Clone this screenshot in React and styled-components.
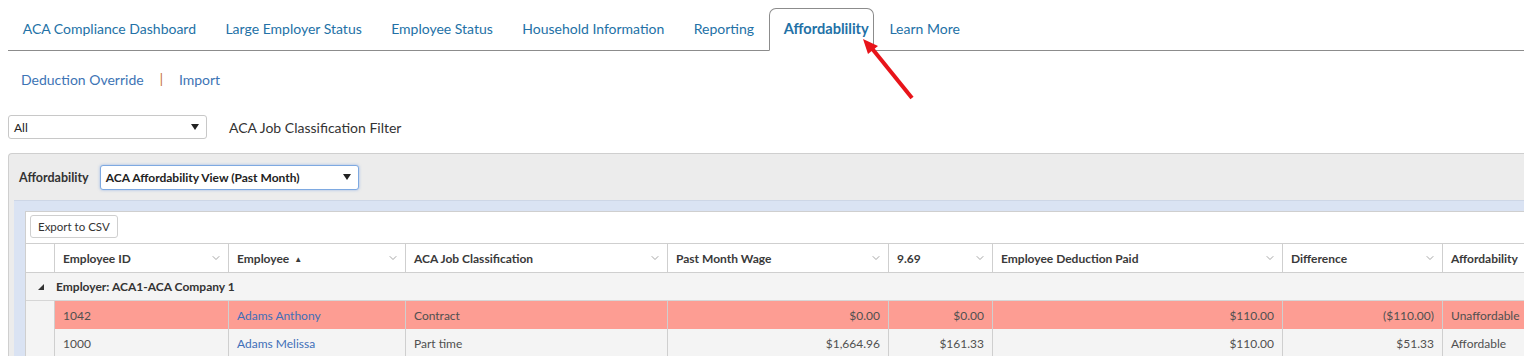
import React from "react";
import styled, { createGlobalStyle } from "styled-components";
import { ChevronDown } from "lucide-react";

const GlobalStyle = createGlobalStyle`
  body {
    margin: 0;
    overflow: hidden;
    background: #fff;
    font-family: Lato, "Open Sans", sans-serif;
    color: #333;
  }
`;

const Page = styled.div`
  position: relative;
  width: 1524px;
  height: 356px;
  overflow: hidden;
  padding-left: 8px;
  box-sizing: border-box;
`;

const TabBar = styled.div`
  display: flex;
  align-items: flex-end;
  margin-top: 7px;
  height: 43px;
  border-bottom: 1px solid #8c8c8c;
`;

const Tab = styled.div`
  height: ${p => (p.$active ? "43px" : "42px")};
  display: flex;
  align-items: center;
  box-sizing: border-box;
  padding: ${p => (p.$active ? "0 4px 2px 14px" : "0 14.7px 2px")};
  margin-bottom: ${p => (p.$active ? "-1px" : "0")};
  font-size: ${p => (p.$active ? "14.6px" : "14px")};
  font-weight: ${p => (p.$active ? 700 : 400)};
  color: #2371a6;
  background: #fff;
  border: ${p => (p.$active ? "1px solid #8c8c8c" : "none")};
  border-bottom: ${p => (p.$active ? "1px solid #fff" : "none")};
  border-radius: 7px 7px 0 0;
  white-space: nowrap;
  margin-right: ${p => (p.$active ? "1px" : "0")};
`;

const SubNav = styled.div`
  display: flex;
  align-items: center;
  height: 30px;
  margin-top: 13px;
  padding-left: 13px;
  font-size: 14px;
  color: #3d74b5;
`;

const Sep = styled.span`
  color: #c46a22;
  margin: 0 16px;
  font-size: 13px;
`;

const FilterRow = styled.div`
  display: flex;
  align-items: center;
  gap: 22px;
  margin-top: 21px;
  height: 24px;
`;

const Select = styled.div`
  display: flex;
  align-items: center;
  justify-content: space-between;
  box-sizing: border-box;
  width: ${p => p.$w}px;
  height: ${p => p.$h}px;
  padding: 0 7px 0 5px;
  background: #fff;
  border: 1px solid ${p => (p.$focus ? "#7ea9e1" : "#c8c8c8")};
  box-shadow: ${p => (p.$focus ? "0 0 3px rgba(90,140,220,0.55)" : "none")};
  border-radius: 3px;
  font-size: 12px;
  font-weight: ${p => (p.$bold ? 700 : 400)};
  color: #222;
`;

const Caret = () => (
  <svg width="8" height="6" viewBox="0 0 8 6">
    <path d="M0 0 L8 0 L4 6 Z" fill="#222" />
  </svg>
);

const FilterLabel = styled.span`
  font-size: 14px;
  color: #333;
`;

const Panel = styled.div`
  margin-top: 14px;
  background: #ececec;
  border: 1px solid #cfcfcf;
  border-right: none;
  border-radius: 4px 0 0 0;
  padding-left: 5px;
  width: 1600px;
`;

const PanelHead = styled.div`
  display: flex;
  align-items: center;
  height: 46px;
  padding-left: 5px;
  gap: 11px;
`;

const PanelLabel = styled.span`
  font-size: 12.5px;
  font-weight: 700;
  color: #333;
`;

const GridWrap = styled.div`
  background: #dae3f3;
  border-top: 1px solid #cdd6e6;
  padding: 10px 0 0 11px;
`;

const Grid = styled.div`
  background: #fff;
  border: 1px solid #cfcfcf;
  border-right: none;
`;

const Toolbar = styled.div`
  height: 31px;
  display: flex;
  align-items: center;
  padding: 0 0 2px 4px;
  box-sizing: border-box;
`;

const Button = styled.div`
  display: flex;
  align-items: center;
  height: 23px;
  box-sizing: border-box;
  padding: 0 7px;
  border: 1px solid #cfcfcf;
  border-radius: 3px;
  font-size: 11.5px;
  color: #333;
  background: #fff;
`;

const cols = "28px 175px 177px 262px 221px 104px 290px 160px 150px";

const Row = styled.div`
  display: grid;
  box-sizing: border-box;
  grid-template-columns: ${cols};
  height: ${p => p.$h || 28}px;
  border-top: ${p => (p.$top ? "1px solid #cfcfcf" : "none")};
  border-bottom: ${p => (p.$line ? "1px solid #cfcfcf" : "none")};
  background: ${p => p.$bg || "#fff"};
`;

const HeadCell = styled.div`
  display: flex;
  align-items: center;
  justify-content: space-between;
  padding: 0 6px 0 8px;
  border-right: ${p => (p.$blank ? "none" : "1px solid #cfcfcf")};
  border-left: ${p => (p.$first ? "1px solid #cfcfcf" : "none")};
  font-size: 12px;
  font-weight: 700;
  color: #3a3a3a;
  white-space: nowrap;
`;

const Sort = styled.span`
  font-size: 8px;
  margin-left: 5px;
  vertical-align: 1px;
`;

const GroupRow = styled.div`
  display: flex;
  align-items: center;
  box-sizing: border-box;
  height: 28px;
  background: #f4f4f4;
  border-bottom: 1px solid #d6d6d6;
  font-size: 12px;
  font-weight: 700;
  color: #333;
`;

const Toggle = styled.span`
  display: flex;
  justify-content: center;
  width: 30px;
`;

const Cell = styled.div`
  display: flex;
  align-items: center;
  justify-content: ${p => (p.$right ? "flex-end" : "flex-start")};
  padding: 0 8px;
  border-right: 1px solid #cfcfcf;
  border-left: ${p => (p.$first ? "1px solid #cfcfcf" : "none")};
  background: ${p => p.$bg};
  font-size: 12px;
  color: ${p => (p.$link ? "#3f6fb8" : "#505050")};
  white-space: nowrap;
`;

const Indent = styled.div`
  background: #f4f4f4;
`;

const Pointer = styled.svg`
  position: absolute;
  left: 850px;
  top: 30px;
  pointer-events: none;
`;

const tabs = [
  "ACA Compliance Dashboard",
  "Large Employer Status",
  "Employee Status",
  "Household Information",
  "Reporting",
  "Affordablility",
  "Learn More",
];

const headers = [
  { label: "Employee ID" },
  { label: "Employee", sort: true },
  { label: "ACA Job Classification" },
  { label: "Past Month Wage" },
  { label: "9.69" },
  { label: "Employee Deduction Paid" },
  { label: "Difference" },
  { label: "Affordability", noChevron: true },
];

const rows = [
  {
    id: "1042",
    name: "Adams Anthony",
    job: "Contract",
    wage: "$0.00",
    pct: "$0.00",
    paid: "$110.00",
    diff: "($110.00)",
    status: "Unaffordable",
    bg: "#fd9d93",
  },
  {
    id: "1000",
    name: "Adams Melissa",
    job: "Part time",
    wage: "$1,664.96",
    pct: "$161.33",
    paid: "$110.00",
    diff: "$51.33",
    status: "Affordable",
    bg: "#f4f4f4",
  },
];

export default function App() {
  return (
    <>
      <GlobalStyle />
      <Page>
        <TabBar>
          {tabs.map(t => (
            <Tab key={t} $active={t === "Affordablility"}>
              {t}
            </Tab>
          ))}
        </TabBar>

        <SubNav>
          <span>Deduction Override</span>
          <Sep>|</Sep>
          <span>Import</span>
        </SubNav>

        <FilterRow>
          <Select $w={199} $h={24}>
            <span>All</span>
            <Caret />
          </Select>
          <FilterLabel>ACA Job Classification Filter</FilterLabel>
        </FilterRow>

        <Panel>
          <PanelHead>
            <PanelLabel>Affordability</PanelLabel>
            <Select $w={259} $h={25} $focus $bold>
              <span>ACA Affordability View (Past Month)</span>
              <Caret />
            </Select>
          </PanelHead>
          <GridWrap>
            <Grid>
              <Toolbar>
                <Button>Export to CSV</Button>
              </Toolbar>
              <Row $h={30} $top $line>
                <HeadCell $blank />
                {headers.map((h, i) => (
                  <HeadCell key={h.label} $first={i === 0}>
                    <span>
                      {h.label}
                      {h.sort && <Sort>▲</Sort>}
                    </span>
                    {!h.noChevron && <ChevronDown size={12} color="#888" strokeWidth={1.5} />}
                  </HeadCell>
                ))}
              </Row>
              <GroupRow>
                <Toggle>
                  <svg width="6" height="6" viewBox="0 0 6 6">
                    <path d="M6 0 L6 6 L0 6 Z" fill="#333" />
                  </svg>
                </Toggle>
                Employer: ACA1-ACA Company 1
              </GroupRow>
              {rows.map(r => (
                <Row key={r.id} $h={28} $bg="#f4f4f4">
                  <Indent />
                  <Cell $bg={r.bg} $first>{r.id}</Cell>
                  <Cell $bg={r.bg} $link>{r.name}</Cell>
                  <Cell $bg={r.bg}>{r.job}</Cell>
                  <Cell $bg={r.bg} $right>{r.wage}</Cell>
                  <Cell $bg={r.bg} $right>{r.pct}</Cell>
                  <Cell $bg={r.bg} $right>{r.paid}</Cell>
                  <Cell $bg={r.bg} $right>{r.diff}</Cell>
                  <Cell $bg={r.bg}>{r.status}</Cell>
                </Row>
              ))}
            </Grid>
          </GridWrap>
        </Panel>

        <Pointer width="80" height="80" viewBox="0 0 80 80">
          <line x1="62" y1="68" x2="20" y2="16" stroke="#e8141a" strokeWidth="4" />
          <path d="M13 9 L28 16 L18 24 Z" fill="#e8141a" />
        </Pointer>
      </Page>
    </>
  );
}
